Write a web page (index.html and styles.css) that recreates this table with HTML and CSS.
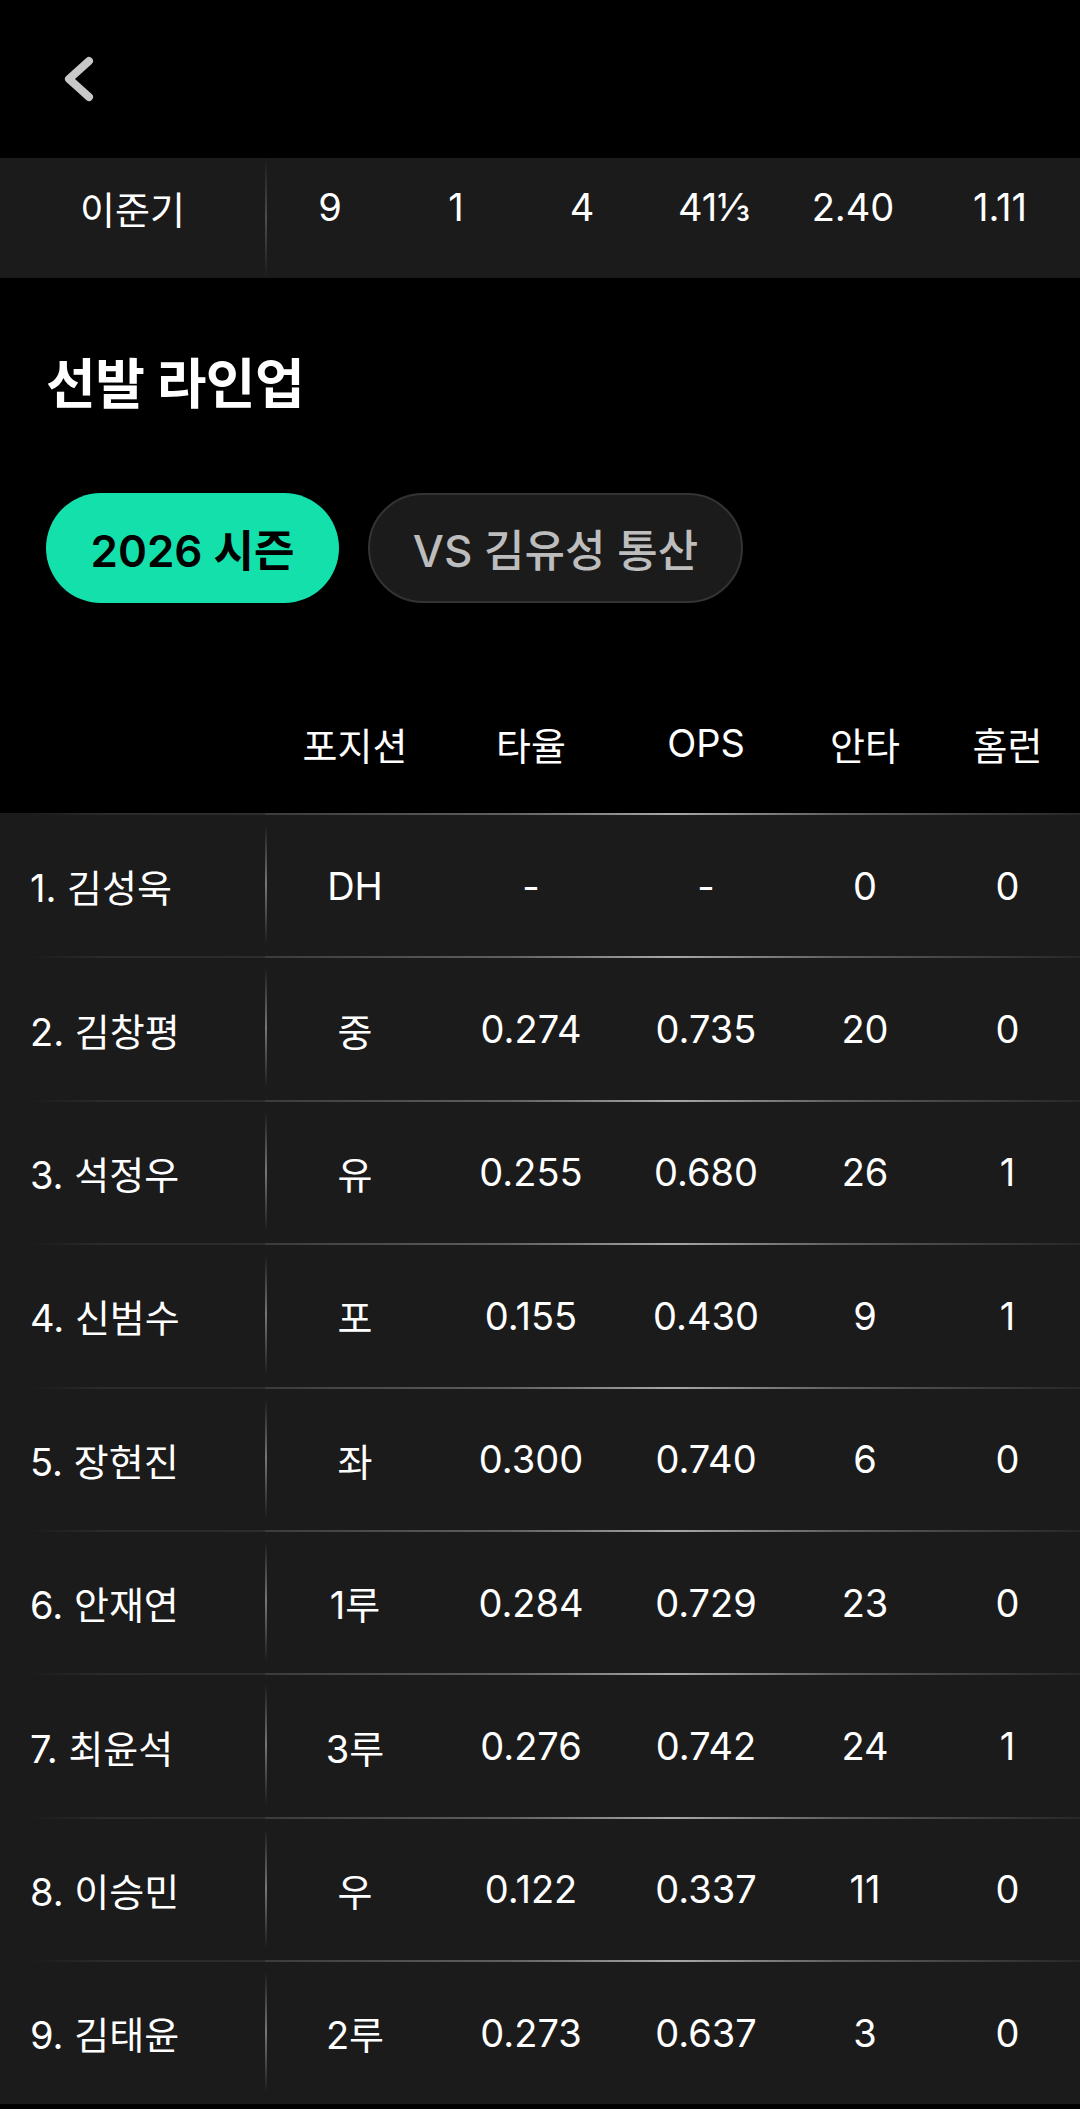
FILE: index.html
```html
<!DOCTYPE html>
<html lang="ko">
<head>
    <meta charset="UTF-8">
    <meta name="viewport" content="width=device-width, initial-scale=1.0">
    <title>선발 라인업</title>
    <link rel="stylesheet" href="styles.css">
</head>
<body>
    <header class="topbar">
        <button class="back-button" aria-label="뒤로">
            <svg width="40" height="56" viewBox="0 0 40 56">
                <polyline points="28,10 8,28 28,46" fill="none" stroke="#c8c8c8" stroke-width="8" stroke-linecap="round" stroke-linejoin="round"/>
            </svg>
        </button>
    </header>

    <section class="pitcher-row">
        <div class="pitcher-name">이준기</div>
        <div class="pitcher-stats">
            <span>9</span>
            <span>1</span>
            <span>4</span>
            <span>41⅓</span>
            <span>2.40</span>
            <span>1.11</span>
        </div>
    </section>

    <section class="lineup">
        <h2 class="lineup-title">선발 라인업</h2>
        <div class="tabs">
            <button class="tab active">2026 시즌</button>
            <button class="tab">VS 김유성 통산</button>
        </div>

        <div class="table-head">
            <div></div>
            <div class="cols">
                <span>포지션</span>
                <span>타율</span>
                <span>OPS</span>
                <span>안타</span>
                <span>홈런</span>
            </div>
        </div>

        <div id="lineup-table" class="table-body"></div>
    </section>

    <script>
        document.addEventListener('DOMContentLoaded', () => {
            const players = [
                ['1. 김성욱', 'DH', '-', '-', '0', '0'],
                ['2. 김창평', '중', '0.274', '0.735', '20', '0'],
                ['3. 석정우', '유', '0.255', '0.680', '26', '1'],
                ['4. 신범수', '포', '0.155', '0.430', '9', '1'],
                ['5. 장현진', '좌', '0.300', '0.740', '6', '0'],
                ['6. 안재연', '1루', '0.284', '0.729', '23', '0'],
                ['7. 최윤석', '3루', '0.276', '0.742', '24', '1'],
                ['8. 이승민', '우', '0.122', '0.337', '11', '0'],
                ['9. 김태윤', '2루', '0.273', '0.637', '3', '0']
            ];
            const table = document.getElementById('lineup-table');

            // Build rows
            players.forEach(([name, ...stats]) => {
                const row = document.createElement('div');
                row.className = 'row';
                const cells = stats.map(s => `<span>${s}</span>`).join('');
                row.innerHTML = `<div class="name">${name}</div><div class="cols">${cells}</div>`;
                table.appendChild(row);
            });
        });
    </script>
</body>
</html>
```

FILE: styles.css
```css
body {
    margin: 0;
    padding: 0;
    background-color: #000;
    color: #fff;
    font-family: Inter, "Noto Sans CJK KR", sans-serif;
}

.topbar {
    height: 158px;
    display: flex;
    align-items: center;
    padding-left: 61px;
}

.back-button {
    background: none;
    border: none;
    padding: 0;
    cursor: pointer;
    display: flex;
}

.pitcher-row {
    height: 120px;
    background-color: #1b1b1b;
    display: flex;
    align-items: center;
    font-size: 38px;
}

.pitcher-name {
    width: 265px;
    text-align: center;
    padding-bottom: 22px;
}

.pitcher-stats {
    flex: 1;
    height: 100%;
    box-sizing: border-box;
    padding-bottom: 22px;
    display: grid;
    grid-template-columns: 130px 122px 130px 134px 144px 150px;
    align-items: center;
    text-align: center;
    background: linear-gradient(180deg, transparent 0%, rgba(255, 255, 255, 0.22) 50%, transparent 100%) left / 2px 100% no-repeat;
}

.lineup-title {
    margin: 0;
    padding: 72px 0 0 46px;
    font-size: 54px;
    font-weight: 700;
    line-height: 70px;
    letter-spacing: -0.5px;
}

.tabs {
    display: flex;
    gap: 29px;
    padding: 73px 0 0 46px;
}

.tab {
    height: 110px;
    border-radius: 55px;
    font-family: inherit;
    font-size: 44px;
    padding: 0;
    cursor: pointer;
}

.tab.active {
    width: 293px;
    background-color: #14e0ac;
    color: #000;
    border: none;
    font-weight: 600;
}

.tab:not(.active) {
    width: 375px;
    background-color: #1b1b1b;
    color: #bdbdbd;
    border: 2px solid #333;
    font-weight: 500;
}

.table-head {
    display: flex;
    height: 140px;
    margin-top: 70px;
    align-items: center;
    font-size: 38px;
}

.table-head > div:first-child {
    width: 265px;
}

.cols {
    flex: 1;
    display: grid;
    grid-template-columns: 180px 172px 178px 140px 1fr;
    text-align: center;
    align-items: center;
}

.table-body {
    background-color: #1b1b1b;
}

.row {
    height: 143.4px;
    display: flex;
    font-size: 38px;
}

.row .name {
    width: 265px;
    display: flex;
    align-items: center;
    padding-left: 30px;
    padding-top: 2px;
    box-sizing: border-box;
    background: linear-gradient(90deg, transparent 10%, rgba(255, 255, 255, 0.07) 40%, rgba(255, 255, 255, 0.08) 100%) top / 100% 2px no-repeat;
}

.row .cols {
    height: 100%;
    box-sizing: border-box;
    padding-top: 2px;
    background:
        linear-gradient(90deg, rgba(255, 255, 255, 0.14) 0%, rgba(255, 255, 255, 0.3) 30%, rgba(255, 255, 255, 0.62) 50%, rgba(255, 255, 255, 0.3) 70%, rgba(255, 255, 255, 0.05) 100%) top / 100% 2px no-repeat,
        linear-gradient(180deg, transparent 8%, rgba(255, 255, 255, 0.4) 50%, transparent 92%) left / 2px 100% no-repeat;
}
```
